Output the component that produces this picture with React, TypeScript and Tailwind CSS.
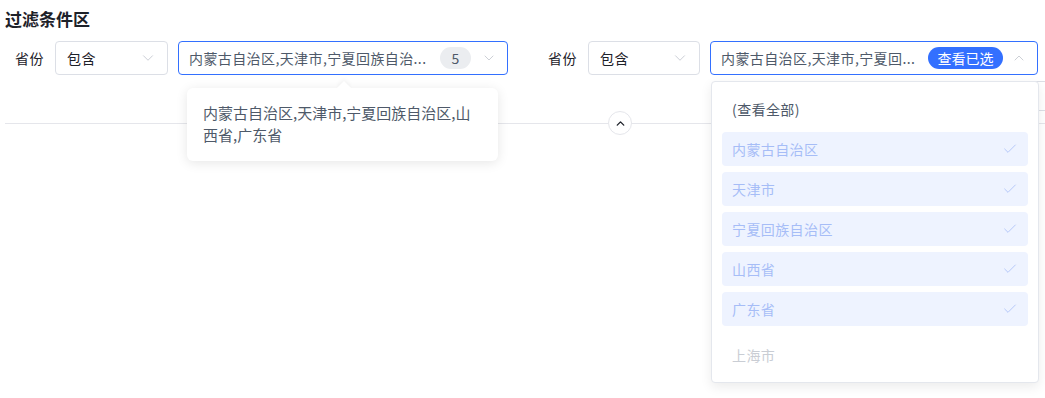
import { ChevronDown, ChevronUp, Check } from 'lucide-react';

const FONT = "font-['Noto_Sans_CJK_SC','Noto_Sans',sans-serif]";

const SELECTED = ['内蒙古自治区', '天津市', '宁夏回族自治区', '山西省', '广东省'];

function Select({ width, value }: { width: string; value: string }) {
  return (
    <div
      className={`flex h-[34px] ${width} items-center justify-between rounded-[4px] border border-[#dcdfe6] bg-white pl-[11px] pr-[10px] text-[14px] text-[#1d2129]`}
    >
      <span>{value}</span>
      <ChevronDown size={18} strokeWidth={1.1} className="text-[#c0c4cc]" />
    </div>
  );
}

export default function App() {
  return (
    <div className={`relative h-[398px] w-[1045px] overflow-hidden bg-white ${FONT}`}>
      <div className="pl-[5px] pt-[7px]">
        <h1 className="h-[24px] text-[17px] font-bold leading-[24px] text-[#1d2129]">过滤条件区</h1>

        <div className="mt-[10px] flex items-center tracking-[0.4px]">
          {/* group 1 */}
          <div className="flex items-center pl-[10px]">
            <span className="w-[40px] text-[14px] text-[#1d2129]">省份</span>
            <Select width="w-[113px]" value="包含" />
            <div className="ml-[10px] flex h-[34px] w-[330px] items-center rounded-[4px] border border-[#3370ff] bg-white pl-[10px] pr-[10px] text-[14px] text-[#4e5969]">
              <span className="flex-1 whitespace-nowrap">内蒙古自治区,天津市,宁夏回族自治...</span>
              <span className="flex h-[22px] w-[31px] items-center justify-center rounded-full bg-[#ebedf0] text-[14px] text-[#4e5969]">
                5
              </span>
              <ChevronDown size={16} strokeWidth={1.2} className="ml-[10px] text-[#c0c4cc]" />
            </div>
          </div>

          {/* group 2 */}
          <div className="ml-[40px] flex items-center">
            <span className="w-[40px] text-[14px] text-[#1d2129]">省份</span>
            <Select width="w-[112px]" value="包含" />
            <div className="ml-[10px] flex h-[34px] w-[328px] items-center rounded-[4px] border border-[#3370ff] bg-white pl-[10px] pr-[10px] text-[14px] text-[#4e5969]">
              <span className="flex-1 whitespace-nowrap">内蒙古自治区,天津市,宁夏回...</span>
              <span className="flex h-[22px] w-[75px] items-center justify-center rounded-full bg-[#3370ff] text-[14px] tracking-normal text-white">
                查看已选
              </span>
              <ChevronUp size={16} strokeWidth={1.2} className="ml-[8px] text-[#c0c4cc]" />
            </div>
          </div>
        </div>

        {/* divider with collapse button */}
        <div className="relative mt-[48px] h-px bg-[#e5e6eb]">
          <div className="absolute left-[603px] top-[-12px] flex h-[24px] w-[24px] items-center justify-center rounded-full border border-[#e5e6eb] bg-white">
            <ChevronUp size={13} strokeWidth={2.5} className="text-[#1d2129]" />
          </div>
        </div>
      </div>

      {/* partially hidden element at far right */}
      <div className="absolute left-[1030px] top-[81px] h-[30px] w-[40px] rounded-[4px] border border-[#dcdfe6] bg-white" />

      {/* tooltip */}
      <div className="absolute left-[187px] top-[88px] w-[311px] rounded-[6px] bg-white pb-[15px] pl-[16px] pr-[13px] pt-[14px] text-[15px] leading-[22px] text-[#4e5969] shadow-[0_2px_12px_rgba(0,0,0,0.1)]">
        <div className="absolute left-[152px] top-[-5px] h-[10px] w-[10px] rotate-45 bg-white shadow-[-2px_-2px_4px_rgba(0,0,0,0.04)]" />
        <p className="relative">内蒙古自治区,天津市,宁夏回族自治区,山西省,广东省</p>
      </div>

      {/* dropdown */}
      <div className="absolute left-[711px] top-[81px] flex h-[302px] w-[328px] flex-col rounded-[4px] border border-[#e4e7ed] bg-white px-[10px] pt-[10px] text-[14px] tracking-[0.4px] shadow-[0_4px_12px_rgba(0,0,0,0.08)]">
        <div className="flex h-[34px] items-center px-[10px] text-[#4e5969]">(查看全部)</div>
        <div className="mt-[6px] flex flex-col gap-[6px]">
          {SELECTED.map((name) => (
            <div
              key={name}
              className="flex h-[34px] items-center justify-between rounded-[4px] bg-[#eef3ff] px-[10px] text-[#a6bdf7]"
            >
              <span>{name}</span>
              <Check size={16} strokeWidth={1.2} className="text-[#a6bdf7]" />
            </div>
          ))}
        </div>
        <div className="mt-[12px] flex h-[34px] items-center px-[10px] text-[#c9cdd4]">上海市</div>
      </div>
    </div>
  );
}
